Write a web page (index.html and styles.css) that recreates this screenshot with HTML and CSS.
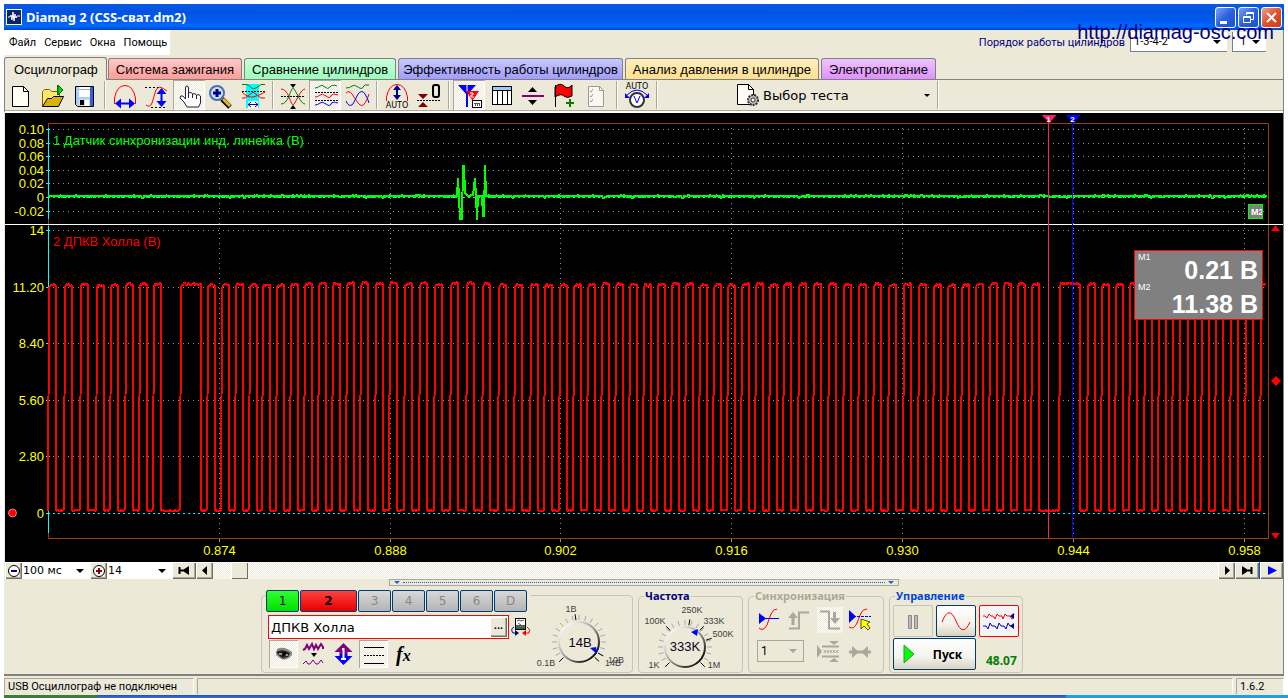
FILE: index.html
```html
<!DOCTYPE html>
<html lang="ru">

<head>
    <meta charset="utf-8">
    <title>Diamag 2 (CSS-сват.dm2)</title>
    <link rel="stylesheet" href="styles.css">
</head>

<body>

    <header class="titlebar">
        <svg class="logo" width="16" height="16"><rect width="16" height="16" fill="#fff"/><rect x="1" y="1" width="14" height="14" fill="#0a246a"/><path d="M2 8h2l1-2 1 5 1-8 1 9 1-7 1 4 1-2h3" fill="none" stroke="#fff"/></svg>
        <h1>Diamag 2 (CSS-сват.dm2)</h1>
        <button class="win" aria-label="Свернуть"><svg width="21" height="21"><rect x="5" y="14" width="7" height="3" fill="#fff"/></svg></button>
        <button class="win" aria-label="Восстановить"><svg width="21" height="21" fill="none" stroke="#fff"><path d="M8.500 8V5.500h7v7H13M8 6.500h8M5.500 9.500h7v6h-7zM5 10.500h8"/></svg></button>
        <button class="win close" aria-label="Закрыть"><svg width="21" height="21"><path d="M6 6l9 9M15 6l-9 9" stroke="#fff" stroke-width="2"/></svg></button>
    </header>

    <div class="window">
        <div class="menurow">
            <nav class="menu">
                <button>Файл</button>
                <button>Сервис</button>
                <button>Окна</button>
                <button>Помощь</button>
            </nav>
            <div class="order">
                <label for="order">Порядок работы цилиндров</label>
                <select id="order" class="order-list"><option>1-3-4-2</option></select>
                <select class="order-num" aria-label="Первый цилиндр"><option>1</option></select>
            </div>
            <a class="site" href="#">http://diamag-osc.com</a>
        </div>

        <div class="tabs">
            <button class="tab active">Осциллограф</button>
            <button class="tab red">Система зажигания</button>
            <button class="tab green">Сравнение цилиндров</button>
            <button class="tab violet">Эффективность работы цилиндров</button>
            <button class="tab yellow">Анализ давления в цилиндре</button>
            <button class="tab pink">Электропитание</button>
        </div>

        <div class="toolbar">
            <div class="group">
                <button class="tool" aria-label="Новый"><svg width="32" height="30"><path d="M7.500 6.500h11l5 5v15h-16z" fill="#fffef4" stroke="#000"/><path d="M18.500 6.500v5h5" fill="none" stroke="#000"/></svg></button>
                <button class="tool" aria-label="Открыть"><svg width="32" height="30"><path d="M5.500 26.500v-15l2-2h5l2 2h8v5" fill="#ffe96b" stroke="#806000"/><path d="M5.500 26.500l5-8h4l2-2h10l-5 10z" fill="#d8b400" stroke="#000"/><path d="M20.500 5v10" stroke="#008000"/><path d="M21 5l5 5-5 5z" fill="#00e000" stroke="#006000"/></svg></button>
                <button class="tool" aria-label="Сохранить"><svg width="32" height="30"><path d="M6.500 6.500h18v20h-16l-2-2z" fill="#a8d0ff" stroke="#000"/><rect x="21" y="7" width="3" height="19" fill="#3060e0"/><rect x="10" y="7" width="11" height="10" fill="#fff"/><path d="M10 9.500h11" stroke="#9ab"/><rect x="10" y="19" width="11" height="7" fill="#d8d8d8"/><rect x="11" y="20" width="4" height="5" fill="#000"/><rect x="16" y="20" width="4" height="6" fill="#fff"/></svg></button>
            </div>
            <i class="sep"></i>
            <div class="group">
                <button class="tool" aria-label="Масштаб по времени"><svg width="32" height="30"><path d="M5.500 24V18Q8 5.500 16 5.500T26.500 18v6" fill="none" stroke="#f00"/><path d="M9 23.500h14" stroke="#00f" stroke-width="2"/><path d="M6 23.500l6-5v10zM26 23.500l-6-5v10z" fill="#00f"/></svg></button>
                <button class="tool" aria-label="Масштаб по амплитуде"><svg width="32" height="30"><path d="M4 7.500h16M10 27.500h15" stroke="#000" stroke-dasharray="2 2"/><path d="M5 25q4 3 6-2l4-13q3-5 8-1l3 2" fill="none" stroke="#f00"/><path d="M20.500 11v13" stroke="#00f" stroke-width="2"/><path d="M20.500 8l5 6h-10zM20.500 27l5-6h-10z" fill="#00f"/></svg></button>
                <button class="tool pressed" aria-label="Рука"><svg width="32" height="30"><path d="M12.500 19V8q0-2 1.500-2t1.500 2v7-2q3-2 4 1 3-1 4 1 3-1 4 1v7l-2 4H14l-3-5-4-4q0-3 3-2z" fill="#fff" stroke="#223"/><path d="M15.500 14v4M19.500 14v4M23.500 15v4" stroke="#223"/></svg></button>
                <button class="tool" aria-label="Лупа"><svg width="32" height="30"><path d="M17 19l8 8" stroke="#000" stroke-width="5"/><path d="M18 19l7 7" stroke="#e8b820" stroke-width="3"/><circle cx="12" cy="13" r="7" fill="#c8e4ff" stroke="#4870b0" stroke-width="2"/><path d="M8 13h8M12 9v8" stroke="#00008b" stroke-width="3"/></svg></button>
                <button class="tool" aria-label="Участок"><svg width="32" height="30" fill="none"><rect x="9" y="4" width="13" height="24" fill="#0ff"/><rect x="11" y="21" width="10" height="7" fill="#fff"/><path d="M5 4.500h4q3 0 5 3t6 0 4-3h4" stroke="#008000"/><path d="M5 11.500h23" stroke="#000" stroke-dasharray="2 1"/><path d="M5 18h3l8-6 8 6h4M5 12q6 6 11 5t12-5" stroke="#f00"/><path d="M11 24.500h10M14 22l-3 2.500 3 2.500M18 22l3 2.500-3 2.500" stroke="#00a"/></svg></button>
            </div>
            <i class="sep"></i>
            <div class="group">
                <button class="tool" aria-label="Совместить"><svg width="32" height="30" fill="none"><path d="M4 9q5 0 8 8t4 8 5-8 7-8" stroke="#f00"/><path d="M4 24q5 0 8-8t4-8 5 8 7 8" stroke="#008000"/><path d="M4 16.500h24" stroke="#000" stroke-dasharray="2 1"/><path d="M13 4h6l-3 4zM13 29h6l-3-4z" fill="#000"/></svg></button>
                <button class="tool pressed" aria-label="Раздельно"><svg width="32" height="30" fill="none"><path d="M6 8q3 0 5-2t5 1 5 0 7-1" stroke="#008000"/><path d="M6 12.500h23M6 20.500h23" stroke="#000" stroke-dasharray="2 1"/><path d="M6 17q3 0 5-2t6 1 5 0 7-1" stroke="#f00"/><path d="M6 25q3 0 5-2t6 1 5 0 7-1" stroke="#00f"/></svg></button>
                <button class="tool" aria-label="Наложение"><svg width="32" height="30" fill="none"><path d="M5 8q4 0 6-2t6 1 5 0 6-2" stroke="#008000"/><path d="M5 13q3-3 6 1l6 9q4 5 7 0t4-9" stroke="#f00"/><path d="M5 21q3 7 7 3l5-10q4-5 7 0t4 9" stroke="#00f"/></svg></button>
            </div>
            <i class="sep"></i>
            <div class="group">
                <button class="tool" aria-label="Авто"><svg width="32" height="30"><path d="M5.500 21V17Q8 4.500 16 4.500T26.500 17v4" fill="none" stroke="#f00"/><path d="M16 8v9" stroke="#00008b" stroke-width="2"/><path d="M16 5l4 5h-8zM16 20l4-5h-8z" fill="#00008b"/><text x="16" y="28" class="tiny">AUTO</text></svg></button>
                <button class="tool" aria-label="Ноль"><svg width="32" height="30"><path d="M5 14h10l-5 5zM5 27h10l-5-5z" fill="#800000"/><path d="M4 20.500h24" stroke="#000" stroke-dasharray="2 1"/><rect x="20" y="5" width="6" height="12" rx="2" fill="none" stroke="#000" stroke-width="2"/></svg></button>
            </div>
            <i class="sep"></i>
            <div class="group">
                <button class="tool pressed" aria-label="Маркеры"><svg width="32" height="30"><path d="M5 5h18l-8 9v13h-2V14z" fill="#00f"/><path d="M14 4v7" stroke="#fff"/><path d="M13 11h13l-6 9v6h-1v-6z" fill="#f00"/><path d="M17 13h3v2h-2v2h3" fill="none" stroke="#fff"/><rect x="19.500" y="20.500" width="9" height="7" fill="#fff" stroke="#000"/><path d="M21 23.500h6M22.500 23v3M24.500 23v3M26.500 23v3" stroke="#555"/></svg></button>
                <button class="tool" aria-label="Таблица"><svg width="32" height="30"><rect x="7.500" y="6.500" width="19" height="18" fill="#fff" stroke="#000"/><rect x="8" y="7" width="18" height="3" fill="#9cc8f8"/><path d="M7 10.500h20M12.500 11v14M17.500 11v14M22.500 11v14" stroke="#000"/></svg></button>
                <button class="tool" aria-label="Разделить"><svg width="32" height="30"><rect x="5" y="15" width="22" height="2" fill="#800080"/><path d="M11 12h9l-4.500-5zM11 20h9l-4.500 5z"/></svg></button>
                <button class="tool" aria-label="Метка"><svg width="32" height="30"><path d="M6 7q5-5 9-1t8-1v11q-5 3-8 0t-9 1z" fill="#f00" stroke="#000"/><path d="M6.500 5v22" stroke="#000"/><path d="M17 23h8M21 19v8" stroke="#008000" stroke-width="2"/></svg></button>
                <button class="tool" aria-label="Отчёт"><svg width="32" height="30"><path d="M7.500 6.500h11l4 4v16h-15z" fill="#f8f8f0" stroke="#999"/><path d="M18.500 6.500v4h4M9 11l1 1 2-3M9 16l1 1 2-3M9 21l1 1 2-3" fill="none" stroke="#999"/></svg></button>
            </div>
            <i class="sep"></i>
            <div class="group">
                <button class="tool" aria-label="Автонапряжение"><svg width="32" height="30" fill="none"><text x="16" y="9" class="tiny">AUTO</text><circle cx="16" cy="20" r="7" fill="#fff" stroke="#333" stroke-width="2"/><path d="M6 15q10-10 20 0" stroke="#00f"/><path d="M4 13v5h5zM28 13v5h-5z" fill="#00f"/><path d="M13 16l3 7 3-7" stroke="#00f"/></svg></button>
            </div>
            <i class="sep"></i>
            <button class="test">
                <svg width="24" height="24"><path d="M1.500 1.500h11l5 5v15h-16z" fill="#fffef4" stroke="#000"/><path d="M12.500 1.500v5h5" fill="none" stroke="#000"/><circle cx="17" cy="17" r="5" fill="#bbb" stroke="#333" stroke-width="2" stroke-dasharray="2 1"/><circle cx="17" cy="17" r="2" fill="#fff" stroke="#333"/></svg>
                <span>Выбор теста</span>
                <i class="arrow small"></i>
            </button>
            <i class="sep"></i>
        </div>

        <main class="scope">
            <svg class="plot"></svg>
            <div class="badge">M2</div>
            <dl class="readout">
                <dt>M1</dt><dd>0.21 В</dd>
                <dt>M2</dt><dd>11.38 В</dd>
            </dl>
        </main>

        <div class="scroll">
            <button class="raised" aria-label="Уменьшить"><svg width="14" height="14"><circle cx="7" cy="7" r="5.500" fill="#fff" stroke="#000"/><path d="M4 7h6" stroke="#00008b" stroke-width="2"/></svg></button>
            <select class="time" aria-label="Развёртка"><option>100 мс</option></select>
            <button class="raised" aria-label="Увеличить"><svg width="14" height="14"><circle cx="7" cy="7" r="5.500" fill="#fff" stroke="#000"/><path d="M4 7h6M7 4v6" stroke="#8b0000" stroke-width="2"/></svg></button>
            <select class="volt" aria-label="Диапазон"><option>14</option></select>
            <button class="raised wide" aria-label="В начало"><svg width="12" height="9"><path d="M1.500 1v7M1 4.500h4" stroke="#000" stroke-width="2"/><path d="M11 0v9L4 4.500z"/></svg></button>
            <button class="raised" aria-label="Назад"><svg width="6" height="9"><path d="M5 0v9L0 4.500z"/></svg></button>
            <div class="track"><i class="thumb"></i></div>
            <button class="raised" aria-label="Вперёд"><svg width="6" height="9"><path d="M1 0v9l5-4.500z"/></svg></button>
            <button class="raised wide" aria-label="В конец"><svg width="12" height="9"><path d="M10.500 1v7M7 4.500h4" stroke="#000" stroke-width="2"/><path d="M1 0v9l7-4.500z"/></svg></button>
            <button class="raised wide play" aria-label="Воспроизвести"><svg width="10" height="9"><path d="M1 0v9l9-4.500z" fill="#00f"/></svg></button>
        </div>

        <div class="splitter"><i class="arrow blue"></i><i class="dots"></i><i class="arrow blue"></i></div>

        <div class="panel">
            <div class="box channels">
                <div class="chan">
                    <div class="chan-tabs">
                        <button class="ch on1">1</button>
                        <button class="ch on2">2</button>
                        <button class="ch" disabled>3</button>
                        <button class="ch" disabled>4</button>
                        <button class="ch" disabled>5</button>
                        <button class="ch" disabled>6</button>
                        <button class="ch" disabled>D</button>
                    </div>
                    <div class="chan-name">
                        <div class="field">
                            <input type="text" value="ДПКВ Холла" aria-label="Название канала">
                            <button class="raised">...</button>
                        </div>
                        <button class="flat" aria-label="Датчик"><svg width="20" height="20"><rect x="4.500" y="1.500" width="10" height="11" fill="#fff" stroke="#000"/><path d="M6 4l2-1 2 1 3-1M7 6l3 2" stroke="#555" fill="none"/><rect x="5" y="8" width="9" height="4" fill="#555"/><path d="M5 9.500h9" stroke="#0c0" stroke-dasharray="1 1"/><path d="M3 10q-4 2-1 6h4" fill="none" stroke="#00008b"/><path d="M4 13v6l4-3z" fill="#00008b"/><path d="M16 10q4 2 2 6h-5" fill="none" stroke="#f00"/><path d="M15 13v6l-4-3z" fill="#f00"/></svg></button>
                    </div>
                    <div class="chan-tools">
                        <button class="flat pressed" aria-label="Показать"><svg width="29" height="28"><path d="M8 9q6-3 12 1l3 2v3l-3 3q-6 3-9 0l-4-3z" fill="#888"/><path d="M7 12q7-4 14 1l-2 4-6 1q-3-2-4-4z" fill="#222"/><path d="M10 14h5M16 15h3" stroke="#fff"/><circle cx="15" cy="14" r="2" fill="#000"/><path d="M14 18h2" stroke="#c00"/></svg></button>
                        <button class="flat" aria-label="Фильтр"><svg width="29" height="28" fill="none"><path d="M4 10l2-1 2-4 2 4 3-5 2 5 2-4 2 4 3-5 2 3v2" stroke="#800080" stroke-width="2"/><path d="M12 13h6l-3 4z" fill="#000"/><path d="M4 24l3-3 2 3h2l3-4 3 4h2l3-4 2 3" stroke="#800080"/></svg></button>
                        <button class="flat" aria-label="Инвертировать"><svg width="29" height="28"><path d="M14.500 3l9 9h-5v2h-8v-2h-5z" fill="#800080"/><path d="M14.500 25l9-9h-5v-2h-8v2h-5z" fill="#00f"/><path d="M14.500 8v11M13 9h1M12 19h5" stroke="#fff" stroke-width="2"/></svg></button>
                        <button class="flat pressed" aria-label="Линии"><svg width="29" height="28"><path d="M5 7.500h20M5 23.500h20" stroke="#000"/><path d="M5 15.500h20" stroke="#000" stroke-dasharray="2 1"/></svg></button>
                        <button class="flat fx" aria-label="Функция"><i>f<small>x</small></i></button>
                    </div>
                </div>
                <svg class="knob" width="104" height="78" data-ring="1">
                    <text x="40" y="16" class="scale">1В</text><text x="15" y="70" class="scale">0.1В</text><text x="85" y="67" class="scale">10В</text><text x="82" y="70" class="scale">14В</text>
                    <text x="49" y="51" class="value">14В</text>
                    <path d="M59 52l6-1 1 7z" fill="#00f"/>
                </svg>
            </div>

            <fieldset class="box freq">
                <legend>Частота</legend>
                <svg class="knob" width="100" height="70" data-ring="2">
                    <text x="16" y="22" class="scale">100K</text><text x="53" y="11" class="scale">250K</text><text x="75" y="22" class="scale">333K</text><text x="84" y="35" class="scale">500K</text><text x="15" y="66" class="scale">1K</text><text x="75" y="66" class="scale">1M</text>
                    <text x="46" y="49" class="value">333K</text>
                    <path d="M52 30l7-3-1 7z" fill="#00f"/>
                </svg>
            </fieldset>

            <fieldset class="box sync">
                <legend>Синхронизация</legend>
                <div class="row">
                    <button class="flat" aria-label="Уровень"><svg width="26" height="26" fill="none"><path d="M2 21q4 4 8-3l4-11q2-5 6-5" stroke="#f00"/><path d="M2 11.500h20" stroke="#00f"/><path d="M2 6v11l7-5.500z" fill="#00f"/></svg></button>
                    <button class="flat" aria-label="По фронту"><svg width="26" height="26" fill="none"><path d="M2 21.500h10v-16h10" stroke="#aca899" stroke-width="2"/><path d="M6 18v-9" stroke="#aca899" stroke-width="3"/><path d="M1 11h10L6 5z" fill="#aca899"/></svg></button>
                    <button class="flat pressed plain" aria-label="По спаду"><svg width="26" height="26" fill="none"><path d="M3 4.500h9v17h11" stroke="#aca899" stroke-width="2"/><path d="M17.500 5v8" stroke="#aca899" stroke-width="3"/><path d="M13 11h10l-5 6z" fill="#aca899"/></svg></button>
                    <button class="flat" aria-label="Выбрать уровень"><svg width="26" height="26" fill="none"><path d="M2 20q5 3 8-4l4-10q2-4 6-4" stroke="#f00"/><path d="M2 9.500h22" stroke="#00f" stroke-dasharray="3 1"/><path d="M2 3v13l7-6.500z" fill="#00f"/><path d="M14 12l9 3-3 2 3 4-2 2-4-4-3 3z" fill="#ff0" stroke="#550"/></svg></button>
                </div>
                <div class="row low">
                    <select aria-label="Канал синхронизации" disabled><option>1</option></select>
                    <svg width="24" height="22"><path d="M1 5v13l5-6.500z" fill="#aca899"/><path d="M6 6.500h17M7 11.500h16M6 16.500h17" stroke="#aca899" stroke-width="2"/><path d="M13 1h10l-5 4zM13 22h10l-5-4z" fill="#aca899"/><path d="M7 11.500h16" stroke="#fff" stroke-dasharray="1 2"/></svg>
                    <svg width="24" height="22"><path d="M1 12h22" stroke="#aca899" stroke-width="3"/><path d="M4 6v12l7-6zM20 6v12l-7-6z" fill="#aca899"/></svg>
                </div>
            </fieldset>

            <fieldset class="box control">
                <legend>Управление</legend>
                <div class="row">
                    <button class="cmd off" aria-label="Пауза"><svg width="36" height="28"><path d="M13.500 8.500h3v13h-3zM19.500 8.500h3v13h-3z" fill="#bbb" stroke="#888"/></svg></button>
                    <button class="cmd" aria-label="Однократно"><svg width="36" height="28"><path d="M4 15q7-18 14-1t14 1" fill="none" stroke="#f00"/></svg></button>
                    <button class="cmd live" aria-label="Непрерывно"><svg width="36" height="28" fill="none"><path d="M2 9h2l2 2 2-4 2 2h2l2 3 2-5 2 2h3l1 3 2-5 2 2h3l2 3 2-5" stroke="#f00"/><path d="M2 19h3l2 3 2-6 2 3h3l2 3 2-6 2 3h3l2 3 2-6 2 3h3" stroke="#00c"/><path d="M29 9l4-3v6zM29 19l4-3v6z" fill="#00008b"/></svg></button>
                </div>
                <div class="row">
                    <button class="cmd start"><svg width="12" height="20"><path d="M1 1v18l10-9z" fill="#0f0" stroke="#393"/></svg><b>Пуск</b></button>
                    <output>48.07</output>
                </div>
            </fieldset>
        </div>
    </div>

    <footer class="status">
        <p class="device">USB Осциллограф не подключен</p>
        <p class="message"></p>
        <p class="version">1.6.2</p>
    </footer>
    <div class="taskbar"><i class="start-edge"></i><i class="tray"></i></div>

    <script>
    const plot = document.querySelector('.plot');
    const H = 449;
    const LEFT = 43, TOP = 10, BOTTOM = 425, SPLIT = 111;

    // axis labels and their levels
    const scale1 = [['0.10', 16], ['0.08', 30], ['0.06', 43], ['0.04', 57], ['0.02', 70], ['0', 84], ['-0.02', 98]];
    const scale2 = [['14', 117], ['11.20', 174], ['8.40', 230], ['5.60', 287], ['2.80', 343], ['0', 400]];
    const times = [['0.874', 171], ['0.888', 342], ['0.902', 512], ['0.916', 683], ['0.930', 854], ['0.944', 1025], ['0.958', 1196]];

    // rising edges of the crankshaft teeth
    const teeth = [1, 17, 33, 49, 63, 78, 92, 106, 133, 160, 174, 188, 202, 215, 229, 243, 257, 271, 285, 299, 313, 328, 342, 357, 372,
        387, 403, 419, 435, 451, 467, 483, 497, 512, 526, 540, 554, 568, 582, 596, 610, 624, 638, 652, 666, 680,
        694, 708, 722, 736, 751, 766, 781, 796, 811, 826, 841, 856, 871, 886, 900, 914, 928, 942, 956, 970, 984, 1012,
        1040, 1054, 1068, 1082, 1097, 1111, 1125, 1140, 1154, 1168, 1183, 1198, 1213];
    const wide = [133, 1012];

    let seed = 7;
    function noise(n) {
        seed = (seed * 16807) % 2147483647;
        return seed % n;
    }

    function line(x1, y1, x2, y2, cls) {
        return `<line class="${cls}" x1="${x1}" y1="${y1}" x2="${x2}" y2="${y2}"/>`;
    }

    function label(x, y, text, cls) {
        return `<text class="${cls}" x="${x}" y="${y}">${text}</text>`;
    }

    function draw() {
        const w = plot.parentNode.clientWidth;
        const right = w - 15;
        const k = (right - LEFT) / 1220;
        const px = v => Math.round(LEFT + v * k);
        let out = '';
        seed = 7;

        scale1.concat(scale2).forEach(s => {
            out += line(LEFT + 5, s[1] + 0.5, right - 3, s[1] + 0.5, 'grid');
            out += line(LEFT - 2, s[1] + 0.5, LEFT + 2, s[1] + 0.5, 'axis');
            out += label(39, s[1] + 5, s[0], 'num left');
        });
        times.forEach(t => {
            const x = px(t[1]) + 0.5;
            out += line(x, 15, x, BOTTOM, 'grid');
            out += line(x, BOTTOM, x, BOTTOM + 4, 'tick');
            out += label(x, 442, t[0], 'num');
        });
        out += `<path class="frame" d="M${LEFT + 0.5} ${TOP + 0.5}H${right + 0.5}V${BOTTOM + 0.5}H${LEFT + 0.5}z"/>`;
        out += line(LEFT + 0.5, 15, LEFT + 0.5, 106, 'axis') + line(LEFT + 0.5, 113, LEFT + 0.5, 420, 'axis');

        // channel 1
        let d = `M${LEFT} 84`;
        const pulse = [[409, 83], [410, 65], [411, 83], [412, 106], [414, 106], [415, 53], [416, 53], [417, 80], [420, 83],
            [425, 82], [427, 65], [428, 83], [429, 107], [430, 83], [434, 83], [435, 103], [436, 103], [437, 52], [438, 83]];
        for (let x = 1; x < 1220; x++) {
            if (x < 409 || x > 438) d += `L${px(x)} ${noise(3) ? 83 : 82 + noise(4)}`;
            if (x === 409) d += pulse.map(p => `L${px(p[0])} ${p[1]}`).join('');
        }
        out += line(LEFT, 84.5, right, 84.5, 'zero');
        out += `<path class="trace ch1" d="${d}"/>`;

        // channel 2
        d = `M${LEFT} 398`;
        teeth.forEach((t, i) => {
            const len = wide.includes(t) ? 20 : 7;
            const end = Math.min(t + len, 1219);
            const top = 171 + noise(2) - (t > 230 && t < 430 ? 1 : 0);
            d += `L${px(t - 1)} 397L${px(t)} ${top + 3}`;
            for (let x = t + 1; x < end; x += 1) d += `L${px(x)} ${top - noise(3) + 1}`;
            if (end < 1219) {
                d += `L${px(end)} ${top}L${px(end)} 398`;
                const next = teeth[i + 1] - 1;
                for (let x = end + 1; x < next; x += 1) d += `L${px(x)} ${397 + noise(2)}`;
            }
        });
        out += `<path class="trace ch2" d="${d}"/>`;
        out += line(LEFT, 400.5, right, 400.5, 'zero');

        out += line(0, SPLIT + 0.5, w, SPLIT + 0.5, 'split');
        out += label(48, 32, '1 Датчик синхронизации инд. линейка (В)', 'name1');
        out += label(48, 133, '2 ДПКВ Холла (В)', 'name2');

        // markers
        [[1000, '1', '#ff2060'], [1024, '2', '#0000ff']].forEach(m => {
            const x = px(m[0]) + 0.5;
            out += `<path d="M${x - 7} 2h15l-7 8z" fill="${m[2]}"/><path d="M${x} 2V${BOTTOM}" stroke="${m[2]}"/>`;
            out += label(x, 9, m[1], 'mark');
        });
        out += '<circle cx="7.500" cy="400" r="4" fill="#f00" stroke="#fff" stroke-width=".5"/>';
        out += `<path d="M${w - 12} 118h9l-4.500-6zM${w - 7} 263l5 5-5 5-5-5zM${w - 12} 420h9l-4.500 6z" fill="#f00"/>`;

        plot.setAttribute('width', w);
        plot.setAttribute('height', H);
        plot.innerHTML = out;
    }

    // ring and ticks of the knobs
    function ring(svg) {
        const first = svg.dataset.ring === '1';
        const big = first ? [225, 352, 120, 134] : [225, 318, 10, 42, 72, 135];
        const cx = first ? 48 : 46;
        const cy = first ? 46 : 45;
        let out = `<defs><linearGradient id="metal${cx}" x1="0" y1="0" x2="1" y2="1"><stop offset=".1" stop-color="#fff"/><stop offset=".5" stop-color="#999"/><stop offset=".9" stop-color="#000"/></linearGradient></defs>`;
        const tick = (a, r1, r2, color) => {
            const s = Math.sin(a * Math.PI / 180), c = -Math.cos(a * Math.PI / 180);
            out += `<path d="M${cx + s * r1} ${cy + c * r1}L${cx + s * r2} ${cy + c * r2}" stroke="${color}"/>`;
        };
        for (let a = -135; a <= 135; a += 15) tick(a, 22, 27, '#aca899');
        big.forEach(a => tick(a, 22, 28, '#000'));
        out += `<circle cx="${cx}" cy="${cy}" r="20" fill="#ece9d8" stroke="url(#metal${cx})" stroke-width="2"/>`;
        svg.innerHTML = out + svg.innerHTML;
    }

    document.querySelectorAll('.knob').forEach(ring);
    window.addEventListener('resize', draw);
    draw();
    </script>
</body>

</html>
```
FILE: styles.css
```css
/* General styles */

* {
    box-sizing: border-box;
}

body {
    margin: 0;
    padding: 4px 0 0 4px;
    min-height: 100vh;
    display: flex;
    flex-direction: column;
    background-color: white;
    font-family: Roboto, "Noto Sans", sans-serif;
    font-size: 11px;
    color: black;
}

button,
select,
input {
    margin: 0;
    padding: 0;
    border: 0;
    background: none;
    font: inherit;
    color: inherit;
}

svg {
    display: block;
    flex: none;
}

p {
    margin: 0;
}

/* Title bar */

.titlebar {
    height: 26px;
    margin-right: 4px;
    padding: 0 2px;
    display: flex;
    align-items: center;
    gap: 2px;
    background: linear-gradient(#0a5be0, #0054e3 30%, #0058ee 60%, #0068ff 85%, #0046c8);
}

.titlebar h1 {
    flex: 1;
    margin: 0 2px;
    font-family: "Noto Sans", sans-serif;
    font-size: 13px;
    font-weight: bold;
    line-height: 20px;
    color: white;
}

.win {
    width: 21px;
    height: 21px;
    border: 1px solid white;
    border-radius: 3px;
    background: linear-gradient(135deg, #7ba2f0, #2a60e0 50%, #1f50d0);
}

.win svg {
    margin: -1px;
}

.close {
    background: linear-gradient(135deg, #f0a088, #e0502c 50%, #c83c14);
}

/* Menu */

.window {
    margin-right: 4px;
    background-color: #ece9d8;
    border-right: 1px solid #808080;
    border-bottom: 2px solid #808080;
}

.menurow {
    position: relative;
    height: 27px;
    display: flex;
    justify-content: space-between;
}

.menu {
    width: 166px;
    height: 25px;
    padding-left: 5px;
    display: flex;
    gap: 8px;
    background-color: white;
}

.order {
    height: 24px;
    padding: 2px 17px 2px 0;
    display: flex;
    align-items: center;
    gap: 5px;
    color: #000080;
}

.order select,
.scroll select,
.sync select {
    appearance: none;
    height: 20px;
    padding: 0 3px;
    border-left: 1px solid #808080;
    border-bottom: 1px solid #808080;
    background: white url("data:image/svg+xml,%3Csvg xmlns='http://www.w3.org/2000/svg' width='8' height='4'%3E%3Cpath d='M0 0h8L4 4z'/%3E%3C/svg%3E") no-repeat right 6px center;
    color: black;
}

.order .order-list {
    width: 97px;
}

.order .order-num {
    width: 34px;
    padding-left: 7px;
}

.site {
    position: absolute;
    right: 9px;
    top: -9px;
    font-family: "Liberation Sans", sans-serif;
    font-size: 20px;
    line-height: 23px;
    color: #000080;
    text-decoration: none;
}

/* Tabs */

.tabs {
    height: 23px;
    display: flex;
    align-items: flex-end;
    gap: 2px;
    border-bottom: 1px solid #808080;
}

.tab {
    height: 21px;
    padding: 0 7px;
    border: 1px solid #808080;
    border-bottom: 0;
    border-radius: 3px 3px 0 0;
    font-family: "Liberation Sans", sans-serif;
    font-size: 13px;
    white-space: nowrap;
}

.tab.active {
    height: 23px;
    margin: 0 -1px -1px 0;
    padding: 0 8px 0 9px;
    background-color: #ece9d8;
}

.tab.red { background: linear-gradient(#ffc8c8, #ff9c98); }
.tab.green { background: linear-gradient(#c8ffdc, #98ffb8); }
.tab.violet { padding: 0 4px; background: linear-gradient(#c8c8ff, #a09cff); }
.tab.yellow { background: linear-gradient(#ffeec0, #ffe08c); }
.tab.pink { background: linear-gradient(#ecc4ff, #e090ff); }

/* Toolbar */

.toolbar {
    height: 33px;
    display: flex;
    border-left: 1px solid #808080;
    border-bottom: 2px solid white;
    box-shadow: inset 0 -1px #aca899;
}

.group {
    display: flex;
}

.tool {
    width: 32px;
    height: 30px;
}

.pressed {
    background: repeating-conic-gradient(#fff 0 25%, #ece9d8 0 50%) 0 0 / 2px 2px;
    box-shadow: inset 1px 1px #aca899, inset -1px -1px white;
}

.pressed.plain {
    box-shadow: none;
}

.sep {
    width: 2px;
    height: 28px;
    margin: 1px 3px;
    border-left: 1px solid #aca899;
    border-right: 1px solid white;
}

.tiny {
    font-family: "DejaVu Sans", sans-serif;
    font-size: 8px;
    text-anchor: middle;
    fill: black;
}

.test {
    width: 198px;
    height: 30px;
    margin-left: 75px;
    padding-right: 4px;
    display: flex;
    align-items: center;
    gap: 3px;
    font-family: "DejaVu Sans", sans-serif;
    font-size: 13px;
}

.test span {
    flex: 1;
    text-align: left;
}

.arrow {
    border: 4px solid transparent;
    border-top-color: black;
    border-bottom: 0;
}

.arrow.small {
    border-width: 3px 3px 0;
}

.arrow.blue {
    border-width: 3px 3px 0;
    border-top-color: #2060d0;
}

/* Oscilloscope screen */

.scope {
    position: relative;
    height: 449px;
    margin-left: 1px;
    background-color: black;
    overflow: hidden;
    font-family: "Liberation Sans", sans-serif;
}

.plot {
    font-size: 13px;
    fill: none;
}

.grid { stroke: #909090; stroke-dasharray: 1 4; }
.tick { stroke: #909090; }
.axis { stroke: #00ffff; }
.frame { stroke: #a04000; }
.split { stroke: white; }
.zero { stroke: #00ffff; stroke-dasharray: 2 3; }

.trace {
    stroke-width: 2;
    stroke-linejoin: bevel;
    shape-rendering: crispEdges;
}

.ch1 { stroke: #00ff00; }
.ch2 { stroke: #ff0000; }
.name1 { fill: #00ff00; }
.name2 { fill: #ff0000; }

.num {
    fill: #ffff00;
    text-anchor: middle;
}

.num.left {
    text-anchor: end;
}

.mark {
    fill: white;
    font-size: 8px;
    font-weight: bold;
    text-anchor: middle;
}

.badge {
    position: absolute;
    right: 20px;
    top: 91px;
    width: 15px;
    height: 15px;
    padding-left: 2px;
    border: 1px solid #00ff00;
    background-color: #808080;
    font-size: 9px;
    font-weight: bold;
    line-height: 14px;
    color: white;
    overflow: hidden;
}

.readout {
    position: absolute;
    right: 20px;
    top: 137px;
    width: 129px;
    height: 70px;
    margin: 0;
    padding: 1px 4px 0 3px;
    border: 1px solid #ff0000;
    background-color: #808080;
    color: white;
}

.readout dt {
    height: 10px;
    font-size: 9px;
    line-height: 11px;
}

.readout dd {
    height: 20px;
    margin: 0;
    font-size: 25px;
    font-weight: bold;
    line-height: 17px;
    text-align: right;
}

.readout dd:last-child {
    line-height: 24px;
}

/* Scroll row */

.scroll {
    height: 17px;
    margin-left: 1px;
    display: flex;
}

.raised {
    width: 17px;
    height: 17px;
    display: flex;
    align-items: center;
    justify-content: center;
    background-color: #ece9d8;
    box-shadow: inset 1px 1px white, inset -1px -1px #716f64, inset -2px -2px #aca899;
}

.raised.wide {
    width: 24px;
}

.raised.play {
    border-left: 1px solid #0054e3;
}

.scroll select {
    height: 17px;
    padding: 0 1px;
    border: 0;
    font-family: "DejaVu Sans", sans-serif;
    font-size: 11px;
}

.time {
    width: 68px;
}

.volt {
    width: 65px;
}

.track {
    flex: 1;
    padding-left: 18px;
    background: repeating-conic-gradient(#fff 0 25%, #ece9d8 0 50%) 0 0 / 2px 2px;
}

.thumb {
    display: block;
    width: 17px;
    height: 17px;
    background-color: #ece9d8;
    box-shadow: inset 1px 1px white, inset -1px -1px #716f64;
}

.splitter {
    width: 510px;
    height: 7px;
    margin: 0 auto;
    padding: 0 4px;
    display: flex;
    align-items: center;
    gap: 3px;
    border: 1px solid #aca899;
}

.dots {
    flex: 1;
    border-top: 1px dotted #2060d0;
}

/* Control panel */

.panel {
    height: 88px;
    padding: 4px 3px 0 0;
    display: flex;
    justify-content: center;
    gap: 5px;
}

.box {
    height: 83px;
    margin: 0;
    padding: 0;
    border: 1px solid #c8c5b8;
    border-radius: 4px;
    min-width: 0;
}

.box legend {
    height: 12px;
    margin-left: 5px;
    padding: 0 1px;
    font-family: "Noto Sans", sans-serif;
    font-size: 11px;
    font-weight: bold;
    line-height: 12px;
    color: #000080;
}

.channels {
    width: 372px;
    height: 78px;
    margin-top: 5px;
    display: flex;
    justify-content: space-between;
}

.chan {
    width: 270px;
    margin-top: -6px;
    padding-left: 4px;
}

.chan-tabs {
    display: flex;
    gap: 1px;
    background-color: #ece9d8;
}

.ch {
    width: 33px;
    height: 22px;
    border: 1px solid #003c74;
    border-radius: 2px;
    background: linear-gradient(#d8d8d8, #b4b4b4);
    font-family: "DejaVu Sans", sans-serif;
    font-size: 12px;
    color: #888;
}

.on1 {
    background: linear-gradient(#30ff30, #00e000);
    color: black;
}

.on2 {
    width: 57px;
    background: linear-gradient(#ff4040, #e80000);
    font-weight: bold;
    color: black;
}

.chan-name {
    height: 24px;
    margin: 3px 0 1px 2px;
    display: flex;
    gap: 2px;
}

.field {
    width: 241px;
    padding: 1px;
    display: flex;
    border: 1px solid #ff0000;
    background-color: white;
}

.field input {
    flex: 1;
    min-width: 0;
    padding-left: 1px;
    font-family: "DejaVu Sans", sans-serif;
    font-size: 13px;
}

.field .raised {
    height: 20px;
    padding-bottom: 4px;
    font-weight: bold;
}

.chan-tools {
    padding-left: 3px;
    display: flex;
    gap: 1px;
}

.fx i {
    padding: 0 7px;
    font-family: "Liberation Serif", serif;
    font-size: 20px;
    font-weight: bold;
}

.fx small {
    font-size: 16px;
}

.knob {
    font-family: "Liberation Sans", sans-serif;
}

.scale {
    font-size: 9px;
    text-anchor: middle;
    fill: #404040;
}

.value {
    font-size: 13px;
    text-anchor: middle;
    fill: #100020;
}

.freq {
    width: 105px;
}

.sync {
    width: 136px;
}

.box.sync legend {
    color: #aca899;
}

.row {
    display: flex;
    align-items: center;
}

.sync .row {
    padding: 5px 0 0 8px;
    gap: 4px;
}

.sync .low {
    padding-top: 7px;
    gap: 8px;
}

.sync select {
    width: 47px;
    height: 22px;
    margin-right: 4px;
    border: 1px solid #aca899;
    background-color: #ece9d8;
    background-image: url("data:image/svg+xml,%3Csvg xmlns='http://www.w3.org/2000/svg' width='8' height='4'%3E%3Cpath d='M0 0h8L4 4z' fill='%23aca899'/%3E%3C/svg%3E");
    font-size: 12px;
    opacity: 1;
}

.control {
    width: 134px;
}

.box.control legend {
    color: #0046d5;
}

.control .row {
    padding: 3px 0 0 3px;
    gap: 3px;
}

.control .row + .row {
    padding-top: 1px;
}

.cmd {
    width: 40px;
    height: 32px;
    display: flex;
    align-items: center;
    justify-content: center;
    border: 1px solid #003c74;
    border-radius: 2px;
    background: linear-gradient(#fff, #f4f3ee 60%, #d8d4c0);
}

.cmd.off {
    border-color: #c8c5b8;
    background: #ece9d8;
}

.cmd.live {
    border-color: #ff0000;
    background: #f4f4f8;
}

.cmd.start {
    width: 83px;
    padding-right: 4px;
    gap: 18px;
    font-family: "Noto Sans", sans-serif;
    font-size: 12px;
}

.control output {
    align-self: flex-end;
    margin: 0 0 2px 7px;
    font-family: "Noto Sans", sans-serif;
    font-size: 12px;
    font-weight: bold;
    line-height: 14px;
    color: #008000;
}

/* Status bar */

.status {
    height: 19px;
    margin-right: 4px;
    padding: 2px 0 1px;
    display: flex;
    gap: 3px;
    background-color: #ece9d8;
}

.status p {
    padding-left: 3px;
    border-top: 1px solid #aca899;
    border-left: 1px solid #aca899;
    border-right: 1px solid white;
    line-height: 15px;
}

.device {
    width: 190px;
}

.message {
    flex: 1;
}

.version {
    width: 48px;
}

.taskbar {
    height: 4px;
    display: flex;
    justify-content: space-between;
    background: linear-gradient(#1c50c0, #3c80f0);
}

.start-edge {
    width: 93px;
    background-color: #388038;
}

.tray {
    width: 222px;
    background-color: #18a0f0;
}
```
